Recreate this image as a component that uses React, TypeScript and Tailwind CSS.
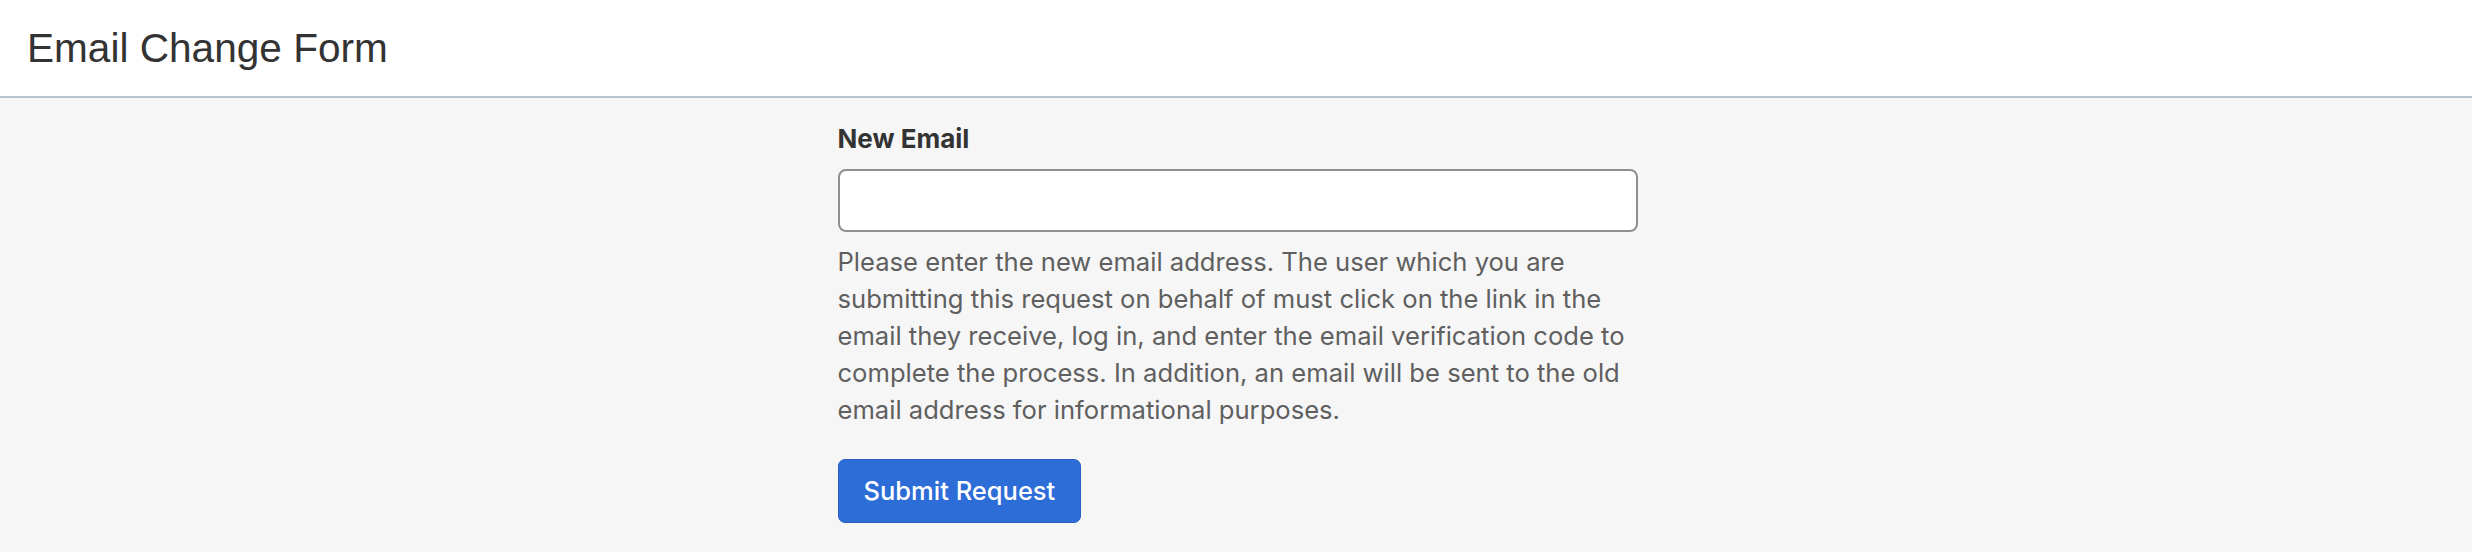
import React from "react";

export default function App() {
  return (
    <div className="min-h-screen w-full bg-[#f6f6f6]" style={{ fontFamily: "Inter, 'Noto Sans', sans-serif" }}>
      <header className="flex h-[98px] items-center border-b-2 border-[#b9c3cc] bg-white pl-[27px]">
        <h1
          className="text-[40.6px] leading-[49px] font-normal text-[#333333]"
          style={{ fontFamily: "'Liberation Sans', Arial, sans-serif" }}
        >
          Email Change Form
        </h1>
      </header>
      <main className="flex justify-center pl-[3px] pt-[25px]">
        <form className="flex w-[800px] flex-col" onSubmit={(e) => e.preventDefault()}>
          <label htmlFor="newEmail" className="text-[26px] leading-[32px] font-bold text-[#333333]">
            New Email
          </label>
          <input
            id="newEmail"
            type="email"
            className="mt-[14px] h-[63px] w-full rounded-[8px] border-2 border-[#8f8f8f] bg-white px-3 text-[24px] outline-none"
          />
          <p className="mt-[11px] text-[25.6px] leading-[37px] text-[#5f5f5f]">
            Please enter the new email address. The user which you are submitting this request on behalf of must click on
            the link in the email they receive, log in, and enter the email verification code to complete the process. In
            addition, an email will be sent to the old email address for informational purposes.
          </p>
          <div className="mt-[31px] flex">
            <button
              type="submit"
              className="h-[64px] rounded-[7px] border border-[#2860c4] bg-[#2d6dd8] px-[25px] text-[25.5px] font-medium leading-none text-white"
            >
              Submit Request
            </button>
          </div>
        </form>
      </main>
    </div>
  );
}
